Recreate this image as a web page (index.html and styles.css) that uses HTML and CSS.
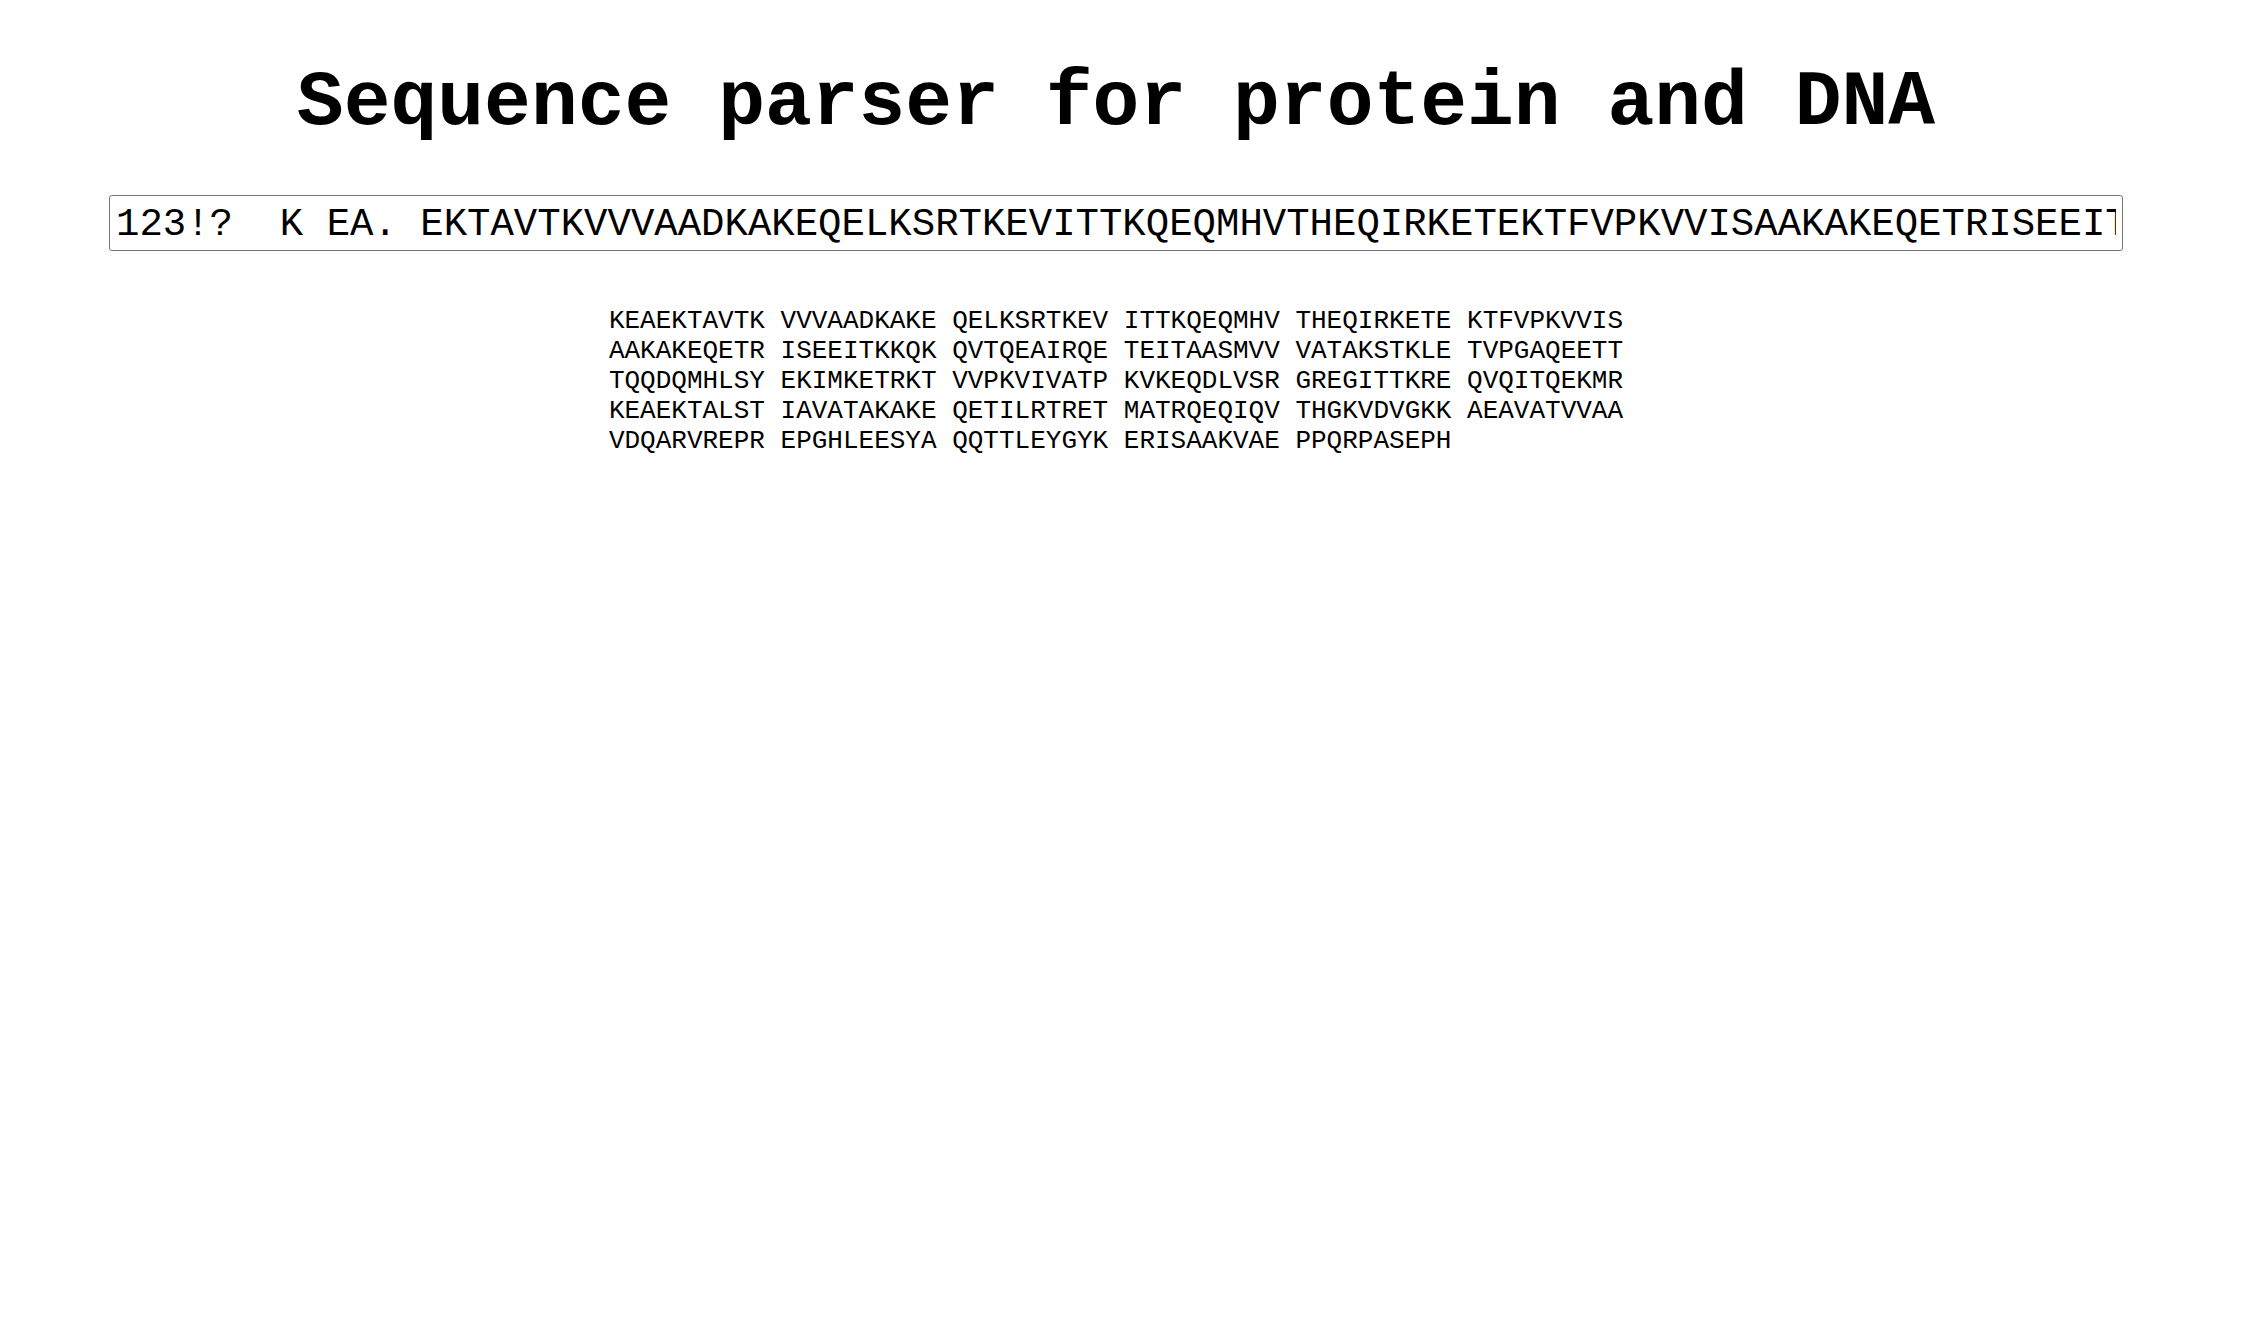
FILE: index.html
```html
<!DOCTYPE html>
<html>
<head>
<meta charset="utf-8">
<title>Sequence parser</title>
<link rel="stylesheet" href="styles.css">
</head>
<body>
<div class="page">
  <h1 class="title">Sequence parser for protein and DNA</h1>
  <div class="input-row">
    <input class="seq-input" type="text" value="123!?  K EA. EKTAVTKVVVAADKAKEQELKSRTKEVITTKQEQMHVTHEQIRKETEKTFVPKVVISAAKAKEQETRISEEITKKQKQVTQEAIRQETEITAASMVVVATAKSTKLETVPGAQEETTTQQDQMHLSYEKIMKETRKTVVPKVIVATPKVKEQDLVSRGREGITTKREQVQITQEKMRKEAEKTALSTIAVATAKAKEQETILRTRETMATRQEQIQVTHGKVDVGKKAEAVATVVAAVDQARVREPREPGHLEESYAQQTTLEYGYKERISAAKVAEPPQRPASEPH">
  </div>
  <div class="output-row">
    <div class="seq-output">KEAEKTAVTK VVVAADKAKE QELKSRTKEV ITTKQEQMHV THEQIRKETE KTFVPKVVIS
AAKAKEQETR ISEEITKKQK QVTQEAIRQE TEITAASMVV VATAKSTKLE TVPGAQEETT
TQQDQMHLSY EKIMKETRKT VVPKVIVATP KVKEQDLVSR GREGITTKRE QVQITQEKMR
KEAEKTALST IAVATAKAKE QETILRTRET MATRQEQIQV THGKVDVGKK AEAVATVVAA
VDQARVREPR EPGHLEESYA QQTTLEYGYK ERISAAKVAE PPQRPASEPH</div>
  </div>
</div>
</body>
</html>
```

FILE: styles.css
```css
html, body {
  margin: 0;
  padding: 0;
  background: #ffffff;
}

body {
  font-family: "Liberation Mono", "Courier New", monospace;
  color: #000000;
}

.page {
  padding: 0 18px 0 8px;
}

.title {
  margin: 59px 0 0 0;
  font-family: "Liberation Mono", "Courier New", monospace;
  font-weight: bold;
  font-size: 78px;
  line-height: normal;
  text-align: center;
}

.input-row {
  display: flex;
  justify-content: center;
  margin-top: 48px;
}

.seq-input {
  box-sizing: border-box;
  width: 2014px;
  height: 56px;
  margin: 0;
  padding: 4px 6px 0 6px;
  border: 1px solid #767676;
  border-radius: 3px;
  font-family: "Liberation Mono", "Courier New", monospace;
  font-size: 39px;
  color: #000000;
  background: #ffffff;
  outline: none;
}

.output-row {
  display: flex;
  justify-content: center;
  margin-top: 55px;
}

.seq-output {
  white-space: pre;
  text-align: left;
  font-family: "Liberation Mono", "Courier New", monospace;
  font-size: 26px;
  line-height: 30px;
}
```
